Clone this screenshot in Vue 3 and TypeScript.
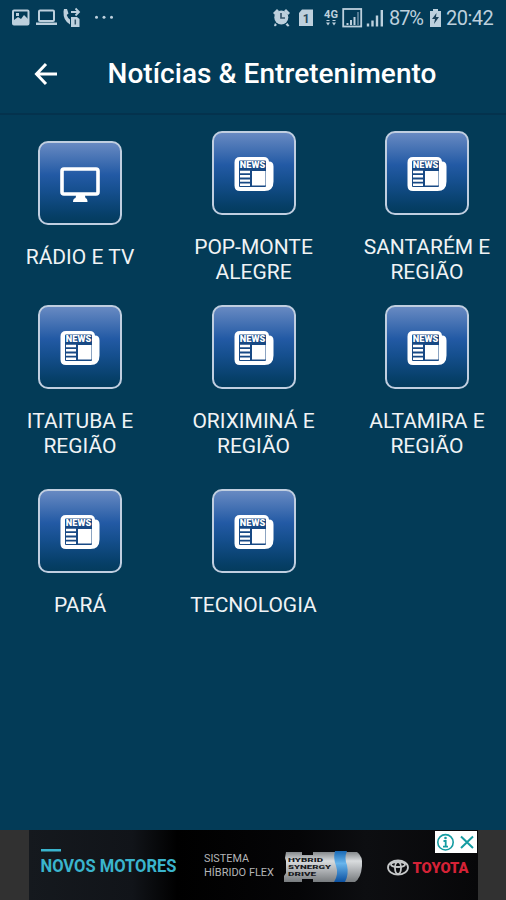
<script setup lang="ts">
interface Category {
  lines: string[]
  icon: 'tv' | 'news'
}

const categories: Category[] = [
  { lines: ['RÁDIO E TV'], icon: 'tv' },
  { lines: ['POP-MONTE', 'ALEGRE'], icon: 'news' },
  { lines: ['SANTARÉM E', 'REGIÃO'], icon: 'news' },
  { lines: ['ITAITUBA E', 'REGIÃO'], icon: 'news' },
  { lines: ['ORIXIMINÁ E', 'REGIÃO'], icon: 'news' },
  { lines: ['ALTAMIRA E', 'REGIÃO'], icon: 'news' },
  { lines: ['PARÁ'], icon: 'news' },
  { lines: ['TECNOLOGIA'], icon: 'news' },
]
</script>

<template>
  <div class="screen">
    <div class="status">
      <svg class="status-left" width="120" height="36" viewBox="0 0 120 36">
        <rect x="13" y="10.5" width="15.5" height="14" rx="1" fill="none" stroke="#bdd0dd" stroke-width="2" />
        <path d="M14 24v-4l4-3 3 2 3-4 4 4v5z" fill="#bdd0dd" />
        <rect x="16" y="13" width="3" height="3" fill="#bdd0dd" />
        <rect x="39" y="10.5" width="15" height="10.5" rx="1" fill="none" stroke="#bdd0dd" stroke-width="2" />
        <path d="M36 22.500h21v2.500H36z" fill="#bdd0dd" />
        <path d="M64 9l3 0 1.500 4.500-1.800 1.500q1 3 3.300 4.500v5q-7-4-6.500-13z" fill="#bdd0dd" />
        <path d="M71 12h7M75.500 8.500l3.500 3.500-3.500 3.500" fill="none" stroke="#bdd0dd" stroke-width="1.800" />
        <path d="M71 17h6l2.500 2v8H71z" fill="#bdd0dd" />
        <path d="M75.300 19.500v5" stroke="#36556b" stroke-width="1.500" />
        <g fill="#bdd0dd"><circle cx="96.500" cy="17.200" r="1.500" /><circle cx="104" cy="17.200" r="1.500" /><circle cx="111.500" cy="17.200" r="1.500" /></g>
      </svg>
      <div class="status-right">
        <svg width="115" height="36" viewBox="270 0 115 36">
          <g fill="#bdd0dd">
            <circle cx="281.300" cy="17.500" r="7" />
            <path d="M273 13l4-4 2 2-4 4zM286 9l4 4-2 2-4-4zM275 23l2 2-2 1.500-1-1zM287.500 23l2 3-2 .5-2-2z" />
            <path d="M302 9.500h11V26h-14V13z" />
            <path d="M326 22.500h4l-2 3zM332 22.500h4l-2 3zM326.500 21h3v-1h-3zM332.500 21h3v-1h-3z" />
          </g>
          <path d="M281 13v5h4" fill="none" stroke="#36556b" stroke-width="1.700" />
          <text x="302.800" y="22.500" class="sim">1</text>
          <text x="324" y="18" textLength="14" lengthAdjust="spacingAndGlyphs" class="network">4G</text>
          <rect x="343.200" y="9" width="18" height="17.500" fill="none" stroke="#bdd0dd" stroke-width="1.800" />
          <path d="M347.500 25v-2M351 25v-5M354.500 25v-8" stroke="#bdd0dd" stroke-width="2" />
          <path d="M358 25V12" stroke="#527991" stroke-width="2" />
          <path d="M368 26.500v-3M372.500 26.500v-6M377 26.500v-11M381.800 26.500V10" stroke="#bdd0dd" stroke-width="2.400" />
        </svg>
        <span class="battery-text">87%</span>
        <svg class="battery" width="13" height="20" viewBox="0 0 13 20">
          <path d="M4 1h5v2h3v16H1V3h3z" fill="#bdd0dd" />
          <path d="M7.500 5L3 11h3l-1 5 5-7H7z" fill="#193f57" />
        </svg>
        <span class="clock">20:42</span>
      </div>
    </div>

    <header class="header">
      <svg class="back" width="24" height="24" viewBox="0 0 24 24">
        <path d="M12 2L2.500 12 12 22M3 12h20" fill="none" stroke="#fff" stroke-width="3" />
      </svg>
      <h1>Notícias &amp; Entretenimento</h1>
    </header>

    <main class="grid">
      <div v-for="category in categories" :key="category.lines.join(' ')" class="item">
        <div class="tile">
          <svg v-if="category.icon === 'tv'" width="40" height="36" viewBox="0 -1 40 36">
            <rect x="2" y="2" width="36" height="25" rx="2" fill="none" stroke="#fff" stroke-width="3.600" />
            <path d="M16.500 27h8l1 4q2 .5 2 4H13q0-3.500 2.500-4z" fill="#fff" />
          </svg>
          <svg v-else width="40" height="36" viewBox="0 0 40 36">
            <path d="M6 1h24q4.500 0 5 4.500 4.500 0 4.500 5v15q0 9.500-9 9.500H6q-5.500 0-5.500-5.500v-23Q.5 1 6 1z" fill="#fff" />
            <rect x="5" y="4.500" width="27" height="26.500" rx="1" fill="#184984" />
            <text x="5.800" y="12.300" textLength="25.400" lengthAdjust="spacingAndGlyphs" class="news">NEWS</text>
            <path d="M6 16h10M6 20.300h10M6 24.600h10M6 28.800h10" stroke="#fff" stroke-width="2.400" />
            <rect x="18" y="15" width="13.500" height="14.500" fill="#fff" />
          </svg>
        </div>
        <div class="label">
          <span v-for="line in category.lines" :key="line">{{ line }}</span>
        </div>
      </div>
    </main>

    <footer class="ad-bar">
      <div class="ad">
        <svg width="449" height="69" viewBox="29 831 449 69">
          <defs>
            <linearGradient id="metal" x1="0" y1="0" x2="0" y2="1">
              <stop offset="0" stop-color="#85898c" /><stop offset=".3" stop-color="#d9dcde" />
              <stop offset=".6" stop-color="#b1b4b7" /><stop offset="1" stop-color="#777b7e" />
            </linearGradient>
            <linearGradient id="band" x1="0" y1="0" x2="0" y2="1">
              <stop offset="0" stop-color="#1969b5" /><stop offset=".4" stop-color="#68b5ec" />
              <stop offset="1" stop-color="#0b50a0" />
            </linearGradient>
          </defs>
          <rect x="41" y="849" width="20" height="2.500" fill="#3ab4cd" />
          <text x="40.500" y="872" textLength="136" lengthAdjust="spacingAndGlyphs" class="motors">NOVOS MOTORES</text>
          <text x="204" y="862" textLength="45" lengthAdjust="spacingAndGlyphs" class="system">SISTEMA</text>
          <text x="204" y="876" textLength="70" lengthAdjust="spacingAndGlyphs" class="system">HÍBRIDO FLEX</text>
          <path d="M286 852h16v3h11v-3h44q6 4 5 14-1 12-7 16h-42v-3h-11v3h-18v-6l2-3v-12l-1-3z" fill="url(#metal)" />
          <path d="M335 851h12q-3 7 0 14 2 10-2 17h-11q5-8 2-16-3-8-1-15z" fill="url(#band)" />
          <g class="hybrid">
            <text x="288" y="861.500" textLength="35" lengthAdjust="spacingAndGlyphs">HYBRID</text>
            <text x="288" y="868.700" textLength="43" lengthAdjust="spacingAndGlyphs">SYNERGY</text>
            <text x="288" y="875.900" textLength="28" lengthAdjust="spacingAndGlyphs">DRIVE</text>
          </g>
          <g fill="none" stroke="#c6c8c9" stroke-width="1.800">
            <ellipse cx="398" cy="867.500" rx="10" ry="7" />
            <ellipse cx="398" cy="864.500" rx="7" ry="2.500" />
            <ellipse cx="398" cy="868" rx="3" ry="6" />
          </g>
          <text x="412.500" y="873" textLength="56" lengthAdjust="spacingAndGlyphs" class="toyota">TOYOTA</text>
          <rect x="435" y="831" width="42" height="22" fill="#fff" />
          <g fill="none" stroke="#159ca2" stroke-width="1.600">
            <circle cx="445.500" cy="842.300" r="7.700" />
            <path d="M461 836.500l12 11.500M473 836.500L461 848" stroke-width="2" />
            <path d="M443.500 841h2.200v5.500M443 846.700h5" stroke-width="1.800" />
          </g>
          <circle cx="445.500" cy="838" r="1.300" fill="#159ca2" />
        </svg>
      </div>
    </footer>
  </div>
</template>

<style>
body { margin: 0; }
</style>

<style scoped>
.screen {
  width: 506px;
  height: 900px;
  display: flex;
  flex-direction: column;
  overflow: hidden;
  background: #033b57;
  color: #f0f3f5;
  font-family: Roboto, "Liberation Sans", sans-serif;
}
.status {
  height: 36px;
  display: flex;
  justify-content: space-between;
  color: #bdd0dd;
}
.status-right { display: flex; align-items: center; width: 236px; font-size: 20px; white-space: nowrap; }
.status-right svg { flex: none; }
.battery-text { width: 39px; margin-left: 4px; letter-spacing: -1.1px; }
.battery { margin-left: 1px; }
.clock { margin-left: 4px; letter-spacing: -0.5px; }
.sim { font-size: 12px; font-weight: 700; fill: #28475d; }
.network { font-size: 10px; font-weight: 700; fill: #bdd0dd; }
.header {
  box-sizing: border-box;
  height: 79px;
  display: flex;
  align-items: center;
  padding: 0 0 2px 34px;
  border-bottom: 2px solid #04324d;
}
.back { flex: none; margin-right: 49.5px; }
h1 { margin: 0; color: #fff; font-size: 28px; line-height: 36px; font-weight: 500; letter-spacing: 0.05px; white-space: nowrap; }
.grid {
  flex: 1;
  display: grid;
  grid-template-columns: repeat(3, 160px);
  grid-auto-rows: 174px;
  column-gap: 13.5px;
  align-content: start;
  padding-top: 5.5px;
}
.item { display: flex; flex-direction: column; align-items: center; justify-content: center; }
.tile {
  box-sizing: border-box;
  width: 84px;
  height: 84px;
  display: flex;
  align-items: center;
  justify-content: center;
  padding-top: 2px;
  border: 2px solid #c0cee0;
  border-radius: 10px;
  background: linear-gradient(#6c8dc4 0%, #235aa5 40%, #154f8e 60%, #063f68 88%, #033b5a 100%) border-box;
}
.label {
  min-height: 29px;
  margin-top: 20px;
  display: flex;
  flex-direction: column;
  align-items: center;
  font-size: 21px;
  line-height: 24.5px;
  white-space: nowrap;
}
.news { font-size: 9px; font-weight: 900; fill: #fff; }
.ad-bar { height: 70px; display: flex; justify-content: center; background: #313131; }
.ad { width: 449px; padding-top: 1px; background: linear-gradient(90deg, #15191e 0%, #111419 23%, #000 33%, #050507 60%, #0d0e11 75%, #070709 100%); }
.ad svg { display: block; }
.motors { font-size: 19px; font-weight: 700; fill: #3ab4cd; }
.system { font-size: 11.5px; fill: #b4b5b7; }
.hybrid { font-size: 6.2px; font-weight: 900; fill: #17191c; }
.toyota { font-size: 15px; font-weight: 900; fill: #d52236; }
</style>
